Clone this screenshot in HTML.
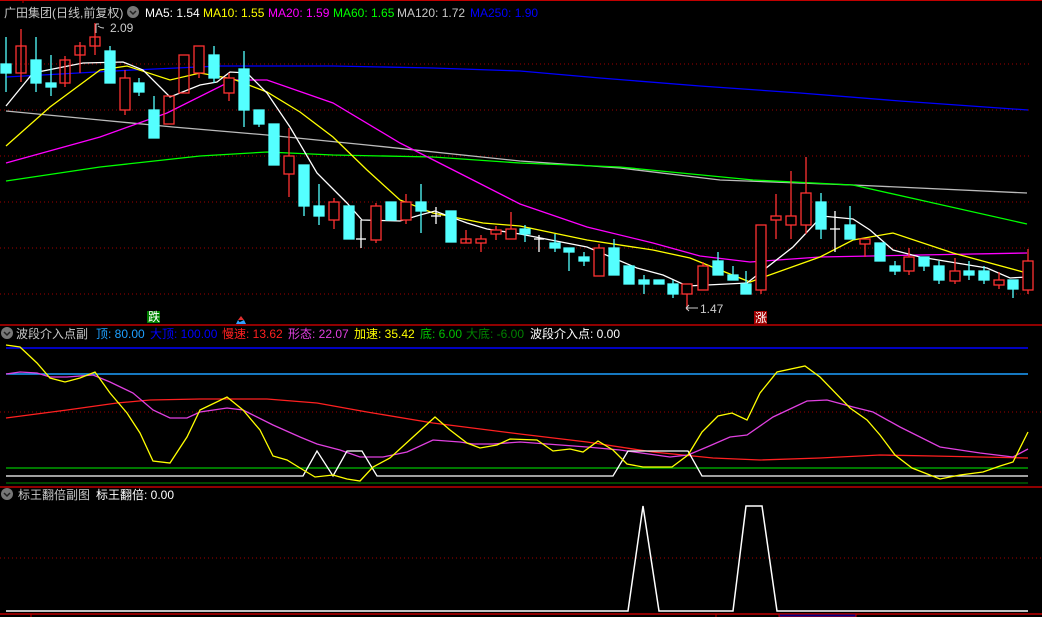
<!DOCTYPE html>
<html><head><meta charset="utf-8"><style>
html,body{margin:0;padding:0;background:#000;width:1042px;height:617px;overflow:hidden}
svg{display:block}
text{font-family:"Liberation Sans","Noto Sans CJK SC",sans-serif;font-size:12px}
</style></head><body>
<svg width="1042" height="617" viewBox="0 0 1042 617" xmlns="http://www.w3.org/2000/svg">
<rect width="1042" height="617" fill="#000"/>
<line x1="0" y1="0.5" x2="1042" y2="0.5" stroke="#c00000"/>
<line x1="23" y1="0" x2="23" y2="3" stroke="#c00000"/>
<!-- grid -->
<g stroke="#a00000" stroke-dasharray="1,3">
<line x1="0" y1="64" x2="1030" y2="64"/><line x1="0" y1="110" x2="1030" y2="110"/>
<line x1="0" y1="156" x2="1030" y2="156"/><line x1="0" y1="202" x2="1030" y2="202"/>
<line x1="0" y1="248" x2="1030" y2="248"/><line x1="0" y1="294" x2="1030" y2="294"/>
<line x1="0" y1="412" x2="1042" y2="412"/><line x1="0" y1="558" x2="1042" y2="558"/>
</g>
<!-- header -->
<text x="4" y="17" fill="#c8c8c8">广田集团(日线,前复权)</text>
<circle cx="133" cy="12" r="6" fill="#777"/><path d="M130 11 L133 14 L136 11" stroke="#222" stroke-width="1.5" fill="none"/>
<text x="145" y="17" fill="#fff">MA5: 1.54</text>
<text x="203" y="17" fill="#ffff00">MA10: 1.55</text>
<text x="268" y="17" fill="#ff00ff">MA20: 1.59</text>
<text x="333" y="17" fill="#00ff00">MA60: 1.65</text>
<text x="397" y="17" fill="#c8c8c8">MA120: 1.72</text>
<text x="470" y="17" fill="#0000ff">MA250: 1.90</text>
<!-- MAs -->
<g fill="none" stroke-width="1.3">
<polyline stroke="#0000ff" points="6,77 133,70 220,66 333,66 433,68 520,71 600,78 700,86 800,93 900,101 1028,110"/>
<polyline stroke="#bbb" points="6,111 100,120 173,127 267,135 367,145 520,161 620,168 720,180 853,185 1027,193"/>
<polyline stroke="#00ff00" points="6,181 100,167 200,156 267,152 333,155 433,157 520,163 620,167 753,180 853,185 920,200 1027,224"/>
<polyline stroke="#ff00ff" points="6,163 100,137 167,113 233,80 267,80 333,103 400,143 467,177 520,204 587,227 653,243 700,256 750,262 820,257 920,255 1027,253"/>
<polyline stroke="#ffff00" points="6,146 50,107 100,70 127,66 170,80 200,73 233,79 267,92 300,112 333,137 367,170 400,200 433,213 483,223 520,226 587,240 653,250 690,258 750,282 820,257 853,240 893,233 953,253 1027,273"/>
<polyline stroke="#fff" points="6,106 33,73 83,63 123,62 143,70 170,97 200,85 217,82 230,72 247,73 267,93 290,127 317,173 347,203 362,220 400,221 420,215 435,211 467,223 487,229 520,234 587,247 637,268 663,275 687,286 747,283 793,247 822,216 853,219 870,230 893,250 920,257 987,268 1010,278 1027,277"/>
</g>
<!-- candles -->
<g stroke-width="1.3">
<g stroke="#ff3232" fill="none">
<line x1="21" y1="29" x2="21" y2="82"/><rect x="16" y="46" width="10" height="27"/>
<line x1="65" y1="56" x2="65" y2="87"/><rect x="60" y="60" width="10" height="23"/>
<line x1="80" y1="42" x2="80" y2="73"/><rect x="75" y="46" width="10" height="9"/>
<line x1="95" y1="23" x2="95" y2="55"/><rect x="90" y="37" width="10" height="9"/>
<line x1="125" y1="70" x2="125" y2="115"/><rect x="120" y="78" width="10" height="32" fill="#000"/>
<rect x="164" y="96" width="10" height="28"/>
<rect x="179" y="55" width="10" height="38"/>
<line x1="199" y1="46" x2="199" y2="78"/><rect x="194" y="46" width="10" height="27" fill="#000"/>
<line x1="229" y1="73" x2="229" y2="101"/><rect x="224" y="78" width="10" height="15" fill="#000"/>
<line x1="289" y1="128" x2="289" y2="197"/><rect x="284" y="156" width="10" height="18" fill="#000"/>
<line x1="334" y1="198" x2="334" y2="229"/><rect x="329" y="202" width="10" height="18" fill="#000"/>
<line x1="376" y1="203" x2="376" y2="243"/><rect x="371" y="206" width="10" height="34" fill="#000"/>
<line x1="406" y1="194" x2="406" y2="224"/><rect x="401" y="202" width="10" height="18" fill="#000"/>
<line x1="466" y1="230" x2="466" y2="243"/><rect x="461" y="239" width="10" height="4"/>
<line x1="481" y1="235" x2="481" y2="252"/><rect x="476" y="239" width="10" height="4" fill="#000"/>
<line x1="496" y1="226" x2="496" y2="240"/><rect x="491" y="230" width="10" height="4" fill="#000"/>
<line x1="511" y1="212" x2="511" y2="239"/><rect x="506" y="229" width="10" height="10" fill="#000"/>
<line x1="599" y1="244" x2="599" y2="276"/><rect x="594" y="248" width="10" height="28" fill="#000"/>
<line x1="687" y1="284" x2="687" y2="310"/><rect x="682" y="284" width="10" height="10" fill="#000"/>
<line x1="703" y1="262" x2="703" y2="290"/><rect x="698" y="266" width="10" height="24" fill="#000"/>
<line x1="761" y1="225" x2="761" y2="294"/><rect x="756" y="225" width="10" height="65" fill="#000"/>
<line x1="776" y1="194" x2="776" y2="239"/><rect x="771" y="216" width="10" height="4" fill="#000"/>
<line x1="791" y1="171" x2="791" y2="239"/><rect x="786" y="216" width="10" height="9" fill="#000"/>
<line x1="806" y1="157" x2="806" y2="234"/><rect x="801" y="193" width="10" height="32" fill="#000"/>
<line x1="865" y1="239" x2="865" y2="257"/><rect x="860" y="239" width="10" height="5" fill="#000"/>
<line x1="909" y1="248" x2="909" y2="275"/><rect x="904" y="257" width="10" height="14" fill="#000"/>
<line x1="955" y1="258" x2="955" y2="284"/><rect x="950" y="271" width="10" height="10" fill="#000"/>
<line x1="999" y1="272" x2="999" y2="289"/><rect x="994" y="280" width="10" height="5" fill="#000"/>
<line x1="1028" y1="249" x2="1028" y2="294"/><rect x="1023" y="261" width="10" height="29" fill="#000"/>
</g>
<g stroke="#54ffff" fill="#54ffff">
<line x1="6" y1="37" x2="6" y2="92"/><rect x="1" y="64" width="10" height="9"/>
<line x1="36" y1="37" x2="36" y2="92"/><rect x="31" y="60" width="10" height="23"/>
<line x1="51" y1="55" x2="51" y2="96"/><rect x="46" y="83" width="10" height="4"/>
<line x1="110" y1="46" x2="110" y2="83"/><rect x="105" y="51" width="10" height="32"/>
<line x1="139" y1="78" x2="139" y2="96"/><rect x="134" y="83" width="10" height="9"/>
<line x1="154" y1="96" x2="154" y2="138"/><rect x="149" y="110" width="10" height="28"/>
<line x1="214" y1="46" x2="214" y2="83"/><rect x="209" y="55" width="10" height="23"/>
<line x1="244" y1="51" x2="244" y2="127"/><rect x="239" y="69" width="10" height="41"/>
<line x1="259" y1="110" x2="259" y2="127"/><rect x="254" y="110" width="10" height="14"/>
<rect x="269" y="124" width="10" height="41"/>
<line x1="304" y1="165" x2="304" y2="216"/><rect x="299" y="165" width="10" height="41"/>
<line x1="319" y1="184" x2="319" y2="225"/><rect x="314" y="206" width="10" height="10"/>
<rect x="344" y="206" width="10" height="33"/>
<rect x="386" y="202" width="10" height="18"/>
<line x1="421" y1="184" x2="421" y2="233"/><rect x="416" y="202" width="10" height="9"/>
<rect x="446" y="211" width="10" height="31"/>
<line x1="525" y1="225" x2="525" y2="242"/><rect x="520" y="229" width="10" height="5"/>
<line x1="555" y1="234" x2="555" y2="252"/><rect x="550" y="243" width="10" height="5"/>
<line x1="569" y1="248" x2="569" y2="271"/><rect x="564" y="248" width="10" height="4"/>
<line x1="584" y1="252" x2="584" y2="266"/><rect x="579" y="257" width="10" height="4"/>
<line x1="614" y1="239" x2="614" y2="275"/><rect x="609" y="248" width="10" height="27"/>
<rect x="624" y="266" width="10" height="18"/>
<line x1="644" y1="275" x2="644" y2="294"/><rect x="639" y="280" width="10" height="4"/>
<rect x="654" y="280" width="10" height="4"/>
<line x1="673" y1="280" x2="673" y2="298"/><rect x="668" y="284" width="10" height="10"/>
<line x1="718" y1="252" x2="718" y2="275"/><rect x="713" y="261" width="10" height="14"/>
<line x1="733" y1="266" x2="733" y2="280"/><rect x="728" y="275" width="10" height="5"/>
<line x1="746" y1="271" x2="746" y2="294"/><rect x="741" y="284" width="10" height="10"/>
<line x1="821" y1="193" x2="821" y2="239"/><rect x="816" y="202" width="10" height="27"/>
<line x1="850" y1="206" x2="850" y2="239"/><rect x="845" y="225" width="10" height="14"/>
<rect x="875" y="243" width="10" height="18"/>
<line x1="895" y1="261" x2="895" y2="275"/><rect x="890" y="266" width="10" height="5"/>
<line x1="924" y1="257" x2="924" y2="271"/><rect x="919" y="257" width="10" height="9"/>
<line x1="939" y1="261" x2="939" y2="284"/><rect x="934" y="266" width="10" height="14"/>
<line x1="969" y1="261" x2="969" y2="280"/><rect x="964" y="271" width="10" height="4"/>
<line x1="984" y1="266" x2="984" y2="284"/><rect x="979" y="271" width="10" height="9"/>
<line x1="1013" y1="280" x2="1013" y2="298"/><rect x="1008" y="280" width="10" height="9"/>
</g>
<g stroke="#fff">
<line x1="361" y1="220" x2="361" y2="248"/><line x1="356" y1="239" x2="366" y2="239"/>
<line x1="436" y1="207" x2="436" y2="224"/><line x1="431" y1="216" x2="441" y2="216"/>
<line x1="539" y1="235" x2="539" y2="252"/><line x1="534" y1="239" x2="544" y2="239"/>
<line x1="835" y1="211" x2="835" y2="252"/><line x1="830" y1="229" x2="840" y2="229"/>
</g>
</g>
<!-- labels -->
<path d="M96 33 V24 M96 24 h3 M98 26 q3 2 6 2" stroke="#ccc" fill="none"/>
<text x="110" y="32" fill="#ccc">2.09</text>
<path d="M686 308 h12 M686 308 l3 -3 M686 308 l3 3" stroke="#ccc" fill="none"/>
<text x="700" y="313" fill="#ccc">1.47</text>
<rect x="147" y="311" width="13" height="12" fill="#008000"/>
<text x="148" y="321" fill="#fff" font-size="11">跌</text>
<path d="M241 316 L238 320 H244 Z" fill="#e03030"/><path d="M238 320 L241 324 H236 Z M244 320 L246 324 H236Z" fill="#30a0ff"/>
<rect x="754" y="311" width="13" height="13" fill="#a00000"/>
<text x="755" y="322" fill="#fff" font-size="11">涨</text>
<!-- panel 2 -->
<line x1="0" y1="325" x2="1042" y2="325" stroke="#c00000" stroke-width="1.5"/>
<circle cx="7" cy="333" r="6" fill="#777"/><path d="M4 332 L7 335 L10 332" stroke="#222" stroke-width="1.5" fill="none"/>
<text x="16" y="338" fill="#c8c8c8">波段介入点副</text>
<text x="96" y="338" fill="#1ea0ff">顶: 80.00</text>
<text x="150" y="338" fill="#0000ff">大顶: 100.00</text>
<text x="222" y="338" fill="#ff2020">慢速: 13.62</text>
<text x="288" y="338" fill="#e040e0">形态: 22.07</text>
<text x="354" y="338" fill="#ffff00">加速: 35.42</text>
<text x="420" y="338" fill="#00c000">底: 6.00</text>
<text x="466" y="338" fill="#008000">大底: -6.00</text>
<text x="530" y="338" fill="#fff">波段介入点: 0.00</text>
<line x1="6" y1="348" x2="1028" y2="348" stroke="#0000ff" stroke-width="1.5"/>
<line x1="6" y1="374" x2="1028" y2="374" stroke="#1ea0ff" stroke-width="1.5"/>
<line x1="6" y1="468" x2="1028" y2="468" stroke="#00c000" stroke-width="1.3"/>
<line x1="6" y1="483" x2="1028" y2="483" stroke="#007000" stroke-width="1.3"/>
<g fill="none" stroke-width="1.3">
<polyline stroke="#ff2020" points="6,418 67,410 117,403 150,400 200,399 267,399 317,403 367,412 433,423 520,434 587,442 653,452 713,458 760,460 820,458 880,455 933,456 1028,458"/>
<polyline stroke="#e040e0" points="6,374 20,372 37,373 50,377 67,377 93,375 110,382 133,393 153,410 170,418 187,418 200,412 227,408 243,410 273,425 300,437 317,444 340,450 360,457 383,457 407,452 433,440 460,442 473,444 493,444 520,442 547,444 587,447 620,450 670,457 688,455 707,447 730,437 747,435 773,417 807,401 827,400 853,407 873,412 900,427 940,447 980,453 1013,457 1028,449"/>
<polyline stroke="#fff" points="6,476 303,476 317,451 333,476 347,451 362,451 377,476 613,476 628,451 688,451 702,476 1028,476"/>
<polyline stroke="#ffff00" points="6,345 20,347 37,363 50,378 65,382 80,378 95,372 110,393 127,413 140,433 153,461 170,463 187,437 200,410 227,397 243,410 260,430 273,456 287,460 300,468 315,477 333,475 347,479 360,481 373,467 390,458 413,437 435,417 450,430 467,443 480,448 497,445 510,439 537,440 553,451 570,449 583,452 598,441 613,450 627,464 643,467 672,467 688,455 702,432 718,416 732,413 747,420 760,393 777,372 805,366 820,377 850,408 867,420 880,435 895,455 912,468 940,479 960,475 983,472 1000,466 1013,462 1028,432"/>
</g>
<!-- panel 3 -->
<line x1="0" y1="487" x2="1042" y2="487" stroke="#c00000" stroke-width="1.5"/>
<circle cx="7" cy="494" r="6" fill="#777"/><path d="M4 493 L7 496 L10 493" stroke="#222" stroke-width="1.5" fill="none"/>
<text x="18" y="499" fill="#c8c8c8">标王翻倍副图</text>
<text x="96" y="499" fill="#fff">标王翻倍: 0.00</text>
<polyline fill="none" stroke="#fff" stroke-width="1.5" points="6,611 628,611 643,506 659,611 733,611 746,506 762,506 777,611 1028,611"/>
<line x1="0" y1="614" x2="1042" y2="614" stroke="#c00000" stroke-width="1.5"/>
<line x1="31" y1="614" x2="31" y2="617" stroke="#c00000"/>
<line x1="716" y1="614" x2="716" y2="617" stroke="#c00000"/>
<rect x="779" y="614" width="77" height="3" fill="#000080" stroke="#c00000"/>
</svg>
</body></html>
